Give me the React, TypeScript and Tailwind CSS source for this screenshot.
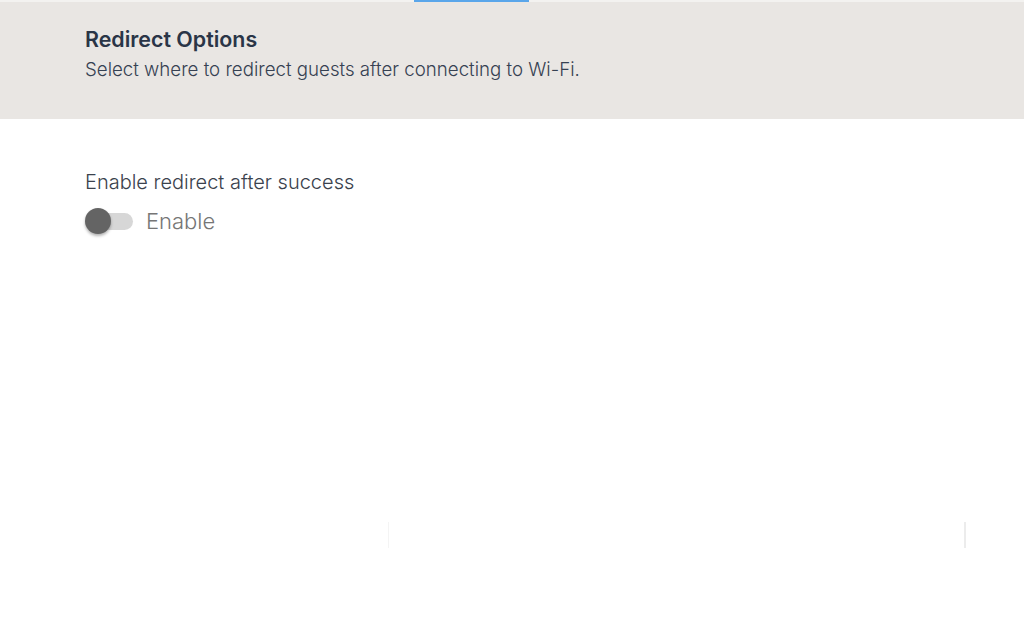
import React from 'react';

export default function App() {
  const [enabled, setEnabled] = React.useState(false);

  return (
    <div className="w-[1024px] h-[640px] bg-white overflow-hidden" style={{ fontFamily: 'Inter, "Noto Sans", sans-serif' }}>
      {/* Header band */}
      <div className="relative h-[119px] bg-[#e9e6e3] border-t-2 border-[#f3f2f0]">
        <div className="absolute -top-[2px] left-[414px] w-[115px] h-[2px] bg-[#5aa6ea]" />
        <div className="pl-[85px] pt-[23px]">
          <h2 className="text-[21.4px] leading-[28px] font-semibold text-[#2a3547]">Redirect Options</h2>
          <p className="mt-[5px] text-[18.7px] leading-[24px] font-light text-[#364152]">
            Select where to redirect guests after connecting to Wi-Fi.
          </p>
        </div>
      </div>

      {/* Body */}
      <div className="pl-[85px] pt-[51px]">
        <div className="text-[20px] leading-[24px] font-light text-[#3b424d]">Enable redirect after success</div>
        <button
          onClick={() => setEnabled(!enabled)}
          className="mt-[14px] flex items-center gap-[13px] cursor-pointer"
        >
          <span className="relative w-[48px] h-[26px] flex items-center">
            <span className={`w-[47px] h-[17px] rounded-full ml-[1px] ${enabled ? 'bg-[#a9cdf0]' : 'bg-[#d7d7d7]'}`} />
            <span
              className={`absolute top-0 w-[26px] h-[26px] rounded-full shadow-[0_2px_3px_rgba(0,0,0,0.3)] ${
                enabled ? 'left-[22px] bg-[#3b8fe0]' : 'left-0 bg-[#646464]'
              }`}
            />
          </span>
          <span className="text-[22px] leading-[26px] font-light text-[#767676]">Enable</span>
        </button>
      </div>

      {/* Faint column edges */}
      <div className="mt-[288px] flex h-[26px]">
        <div className="w-[389px] border-r border-[#f4f4f4]" />
        <div className="w-[577px] border-r-2 border-[#ececec]" />
      </div>
    </div>
  );
}
